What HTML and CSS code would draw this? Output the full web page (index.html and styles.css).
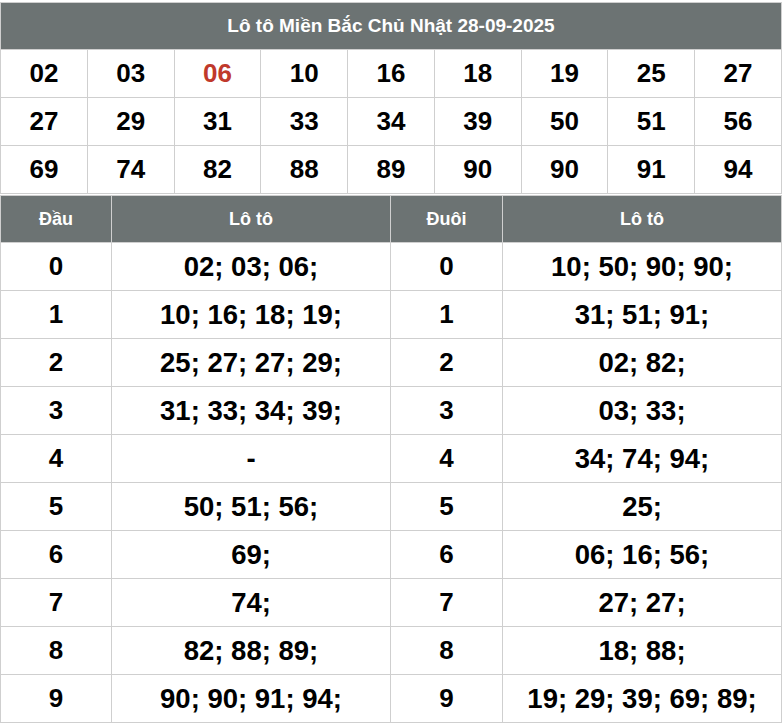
FILE: index.html
```html
<!DOCTYPE html>
<html lang="vi">
<head>
<meta charset="utf-8">
<title>Lô tô Miền Bắc</title>
<link rel="stylesheet" href="styles.css">
</head>
<body>
<div class="page">
  <table class="grid">
    <thead>
      <tr><th colspan="9" class="title">Lô tô Miền Bắc Chủ Nhật 28-09-2025</th></tr>
    </thead>
    <tbody>
      <tr><td>02</td><td>03</td><td class="red">06</td><td>10</td><td>16</td><td>18</td><td>19</td><td>25</td><td>27</td></tr>
      <tr><td>27</td><td>29</td><td>31</td><td>33</td><td>34</td><td>39</td><td>50</td><td>51</td><td>56</td></tr>
      <tr><td>69</td><td>74</td><td>82</td><td>88</td><td>89</td><td>90</td><td>90</td><td>91</td><td>94</td></tr>
    </tbody>
  </table>
  <table class="heads">
    <colgroup><col class="c-key"><col class="c-val"><col class="c-key2"><col class="c-val"></colgroup>
    <thead>
      <tr><th>Đầu</th><th>Lô tô</th><th>Đuôi</th><th>Lô tô</th></tr>
    </thead>
    <tbody>
      <tr><td>0</td><td class="val">02; 03; 06;</td><td>0</td><td class="val">10; 50; 90; 90;</td></tr>
      <tr><td>1</td><td class="val">10; 16; 18; 19;</td><td>1</td><td class="val">31; 51; 91;</td></tr>
      <tr><td>2</td><td class="val">25; 27; 27; 29;</td><td>2</td><td class="val">02; 82;</td></tr>
      <tr><td>3</td><td class="val">31; 33; 34; 39;</td><td>3</td><td class="val">03; 33;</td></tr>
      <tr><td>4</td><td class="val">-</td><td>4</td><td class="val">34; 74; 94;</td></tr>
      <tr><td>5</td><td class="val">50; 51; 56;</td><td>5</td><td class="val">25;</td></tr>
      <tr><td>6</td><td class="val">69;</td><td>6</td><td class="val">06; 16; 56;</td></tr>
      <tr><td>7</td><td class="val">74;</td><td>7</td><td class="val">27; 27;</td></tr>
      <tr><td>8</td><td class="val">82; 88; 89;</td><td>8</td><td class="val">18; 88;</td></tr>
      <tr><td>9</td><td class="val">90; 90; 91; 94;</td><td>9</td><td class="val">19; 29; 39; 69; 89;</td></tr>
    </tbody>
  </table>
</div>
</body>
</html>
```

FILE: styles.css
```css
html, body {
  margin: 0;
  padding: 0;
  background: #ffffff;
}

body {
  font-family: "Liberation Sans", Arial, sans-serif;
  color: #000;
}

.page {
  width: 782px;
  padding-top: 2px;
  display: flex;
  flex-direction: column;
  gap: 1px;
}

table {
  width: 782px;
  border-collapse: collapse;
  table-layout: fixed;
  border: 1px solid #cfcfcf;
}

th, td {
  border: 1px solid #cfcfcf;
  padding: 0;
  text-align: center;
  vertical-align: middle;
  font-weight: bold;
}

th {
  background: #6c7373;
  color: #ffffff;
  font-size: 18px;
  height: 46px;
}

.grid .title {
  height: 46px;
  font-size: 19px;
}

.grid td {
  height: 47px;
  font-size: 26px;
}

.red {
  color: #c0392b;
}

.heads td {
  height: 47px;
  font-size: 26px;
}

.heads td.val {
  font-size: 27.5px;
}

.c-key { width: 111px; }
.c-key2 { width: 112px; }
.c-val { width: 279px; }
```
